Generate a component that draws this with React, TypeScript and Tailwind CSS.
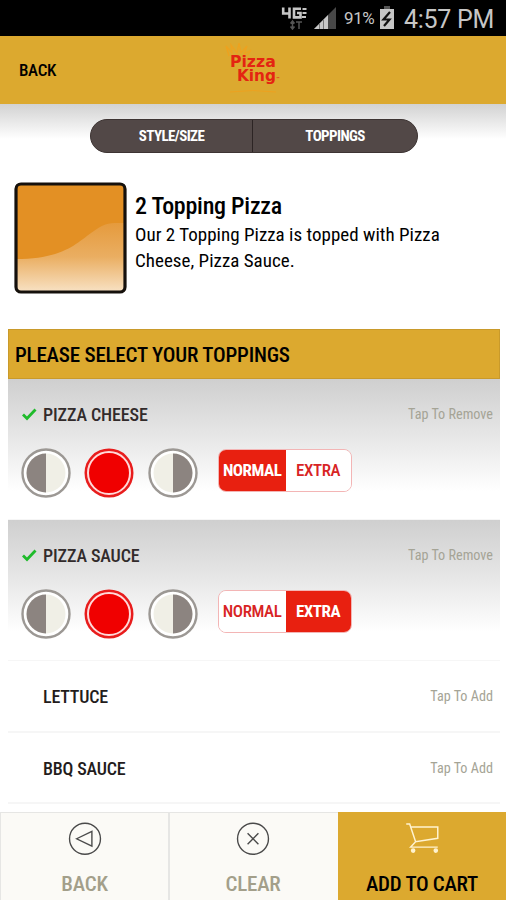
const CONDENSED = "font-['Roboto_Condensed','Roboto',sans-serif] [font-stretch:75%]";

const portions = ['left', 'whole', 'right'];

const StatusBar = () => (
    <div className="flex h-[36px] items-center justify-end bg-black pr-[12px] text-[#c6c6c6] font-['Roboto',sans-serif] [font-stretch:100%]">
        {/*4G and data arrows*/}
        <svg width="28" height="24" viewBox="0 0 28 24" fill="none" stroke="#c6c6c6" strokeWidth="2.600">
            <path d="M3.200 1.500v6H10M9.500 1.500v11M21 2.800H14v8.600h6.500V7H17" />
            <path d="M22.500 3h4M22.500 7h4M22 11h4" strokeWidth="2" />
            <path d="M12.500 15v8M10.500 17.500l2-2.500 2 2.500M10.500 20.500l2 2.500 2-2.500M16 16h6M19 16v7" stroke="#555" strokeWidth="1.500" />
        </svg>
        <svg className="ml-[5px]" width="24" height="24" viewBox="0 0 24 24">
            <path d="M23 1v22H1z" fill="#484848" />
            <path d="M15 9v14H1z" fill="#c8c8c8" />
            <path d="M6.500 17v6M10.500 13v10" stroke="#777" strokeWidth="1" />
        </svg>
        <span className="ml-[7px] w-[31px] pt-[2px] text-[17px] tracking-[-0.500px]">91%</span>
        <svg className="ml-[4px]" width="16" height="24" viewBox="0 0 16 24">
            <path d="M5 0h6v3H5z" fill="#555" />
            <path d="M1 3h14v20H1z" fill="#c6c6c6" />
            <path d="M11 6L4.500 13.500h6L5 20" fill="none" stroke="#111" strokeWidth="2.200" />
        </svg>
        <span className="ml-[9px] pt-[3px] text-[25px] leading-none tracking-[-0.300px]">4:57 PM</span>
    </div>
);

const Logo = () => (
    <div className="relative h-[54px] w-[64px] font-['DejaVu_Sans',sans-serif] [font-stretch:100%] font-bold text-[#e42412]">
        <svg className="absolute left-0 top-0" width="64" height="54" viewBox="0 0 64 54" fill="none" stroke="#eda21f" strokeWidth="1.300">
            <path d="M6 13L3 3l6 7-1-8 6 8 2-10 2 10 6-7-3 8 7-4-4 6" />
            <path d="M7 49q22-3 46 0" strokeWidth="1" />
        </svg>
        <div className="relative pl-[7px] pt-[11px] text-[15.700px] leading-[15px]">Pizza</div>
        <div className="relative flex pl-[14px] text-[15.300px] leading-[15px]">
            King<span className="pt-[7px] text-[4px] leading-[6px]">™</span>
        </div>
    </div>
);

const Portion = ({ side }: { side: string }) => (
    <svg width="50" height="50" viewBox="0 0 50 50">
        {side === 'whole' ? (
            <>
                <circle cx="25" cy="25" r="24.500" fill="#e81c1c" />
                <circle cx="25" cy="25" r="21" fill="#f00000" stroke="#ffd9d9" strokeWidth="2" />
            </>
        ) : (
            <>
                <circle cx="25" cy="25" r="23.500" fill="#fff" stroke="#9c9894" strokeWidth="2.400" />
                <circle cx="25" cy="25" r="19.500" fill="#f0efe6" />
                {side === 'left'
                    ? <path d="M25 5.500a19.500 19.500 0 0 0 0 39z" fill="#8c8480" />
                    : <path d="M25 5.500a19.500 19.500 0 0 1 0 39z" fill="#8c8480" />}
            </>
        )}
    </svg>
);

interface toppingProps {
    name: string
    amount: string
}

const SelectedTopping = ({ name, amount }: toppingProps) => {
    const on = 'bg-[#e82010] text-white font-bold tracking-[-0.500px]';
    const off = 'bg-white text-[#d82424] font-medium tracking-[-0.400px]';

    return (
        <div className="h-[141px] border-b border-[#f6f6f6] bg-linear-to-b from-[#cfcfcf] via-[#e6e6e6] via-40% to-white to-80%">
            <div className="flex items-center justify-between pt-[22px] pl-[14px] pr-[7px] h-[49px]">
                <div className="flex items-center">
                    <svg width="15" height="13" viewBox="0 0 15 13">
                        <path d="M1 6.500l4 4L13.500 1.500" fill="none" stroke="#1fbb2b" strokeWidth="2.800" />
                    </svg>
                    <span className="pl-[6px] text-[18px] font-medium tracking-[-0.120px] text-[#322b2b]">{name}</span>
                </div>
                <span className="text-[14.200px] text-[#a5a496]">Tap To Remove</span>
            </div>
            <div className="flex items-center pl-[13px] pt-[20px]">
                <div className="flex gap-[13.300px]">
                    {portions.map((side) => <Portion key={side} side={side} />)}
                </div>
                <div className="ml-[20px] -mt-[6px] flex h-[43px] w-[134px] overflow-hidden rounded-[8px] border border-[#f3b5b5] text-[17px]">
                    <div className={`flex w-[67px] items-center justify-center pt-px ${amount === 'normal' ? on : off}`}>NORMAL</div>
                    <div className={`flex flex-1 items-center justify-center pt-px ${amount === 'extra' ? on : off}`}>EXTRA</div>
                </div>
            </div>
        </div>
    );
}

const PlainTopping = ({ name }: { name: string }) => (
    <div className="flex h-[71.500px] items-center justify-between border-b-2 border-[#f6f6f6] pl-[35px] pr-[7px] pt-[2px]">
        <span className="text-[18px] font-medium tracking-[-0.200px] text-[#231c1c]">{name}</span>
        <span className="text-[14.200px] text-[#a5a496]">Tap To Add</span>
    </div>
);

export default function App() {
    return (
        <div className={`flex h-[900px] w-[506px] flex-col overflow-hidden bg-white ${CONDENSED}`}>
            <StatusBar />

            {/*Header*/}
            <div className="flex h-[68px] items-center bg-[#dca92f] pl-[19px]">
                <span className="w-[204px] pt-[2px] text-[17px] font-medium tracking-[-0.300px]">BACK</span>
                <Logo />
            </div>

            {/*Tabs*/}
            <div className="h-[78px] bg-linear-to-b from-[#d2d2d2] to-white to-45% pl-[90px] pt-[15px]">
                <div className="flex h-[34px] w-[328px] rounded-full border border-[#3d3433] bg-[#524847] text-[15px] font-bold tracking-[-0.600px] text-white">
                    <div className="flex w-[162px] items-center justify-center border-r border-[#2c2424] pt-px">STYLE/SIZE</div>
                    <div className="flex flex-1 items-center justify-center pt-px">TOPPINGS</div>
                </div>
            </div>

            {/*Item summary*/}
            <div className="flex h-[147px] pl-[14px]">
                <svg width="113" height="112" viewBox="0 0 113 112">
                    <defs>
                        <linearGradient id="glow" x1="0" y1="40" x2="0" y2="110" gradientUnits="userSpaceOnUse">
                            <stop offset="0" stopColor="#e59a3c" />
                            <stop offset="0.500" stopColor="#eaae62" />
                            <stop offset="1" stopColor="#f8e2c4" />
                        </linearGradient>
                    </defs>
                    <rect x="2" y="2" width="109" height="108" rx="5" fill="#e39024" />
                    <path d="M2 77C48 77 62 62 77 51S95 41 111 41V110H2z" fill="url(#glow)" />
                    <rect x="2" y="2" width="109" height="108" rx="5" fill="none" stroke="#15100c" strokeWidth="3.200" />
                </svg>
                <div className="pl-[8px] pt-[9px]">
                    <div className="text-[24px] font-medium leading-[31px] tracking-[-0.250px]">2 Topping Pizza</div>
                    <div className="w-[330px] text-[19px] leading-[26px] tracking-[0.020px]">Our 2 Topping Pizza is topped with Pizza Cheese, Pizza Sauce.</div>
                </div>
            </div>

            {/*Toppings*/}
            <div className="mx-[8px] h-[483px] w-[492px] shrink-0">
                <div className="flex h-[50px] items-center border border-[#c99a2b] bg-[#dca92f] pl-[6px] pt-[3px] text-[21px] font-medium tracking-[-0.200px]">PLEASE SELECT YOUR TOPPINGS</div>
                <SelectedTopping name="PIZZA CHEESE" amount="normal" />
                <SelectedTopping name="PIZZA SAUCE" amount="extra" />
                <PlainTopping name="LETTUCE" />
                <PlainTopping name="BBQ SAUCE" />
            </div>

            {/*Bottom actions*/}
            <div className="flex h-[88px] shrink-0 bg-[#fbfaf6] text-[21px] font-medium tracking-[-0.200px] text-[#a39f8a]">
                <div className="flex w-[170px] flex-col items-center border-r-2 border-l border-t border-[#e6e6e4] pt-[9px]">
                    <svg width="34" height="34" viewBox="0 0 34 34" fill="none" stroke="#4a4a4a" strokeWidth="1.400">
                        <circle cx="17" cy="17" r="15.700" />
                        <path d="M8.500 17L24 9.500v15z" />
                    </svg>
                    <span className="pt-[13px]">BACK</span>
                </div>
                <div className="flex w-[168px] flex-col items-center border-t border-[#e6e6e4] pr-[2px] pt-[9px]">
                    <svg width="34" height="34" viewBox="0 0 34 34" fill="none" stroke="#4a4a4a" strokeWidth="1.400">
                        <circle cx="17" cy="17" r="15.700" />
                        <path d="M11.500 11.500l11 11M22.500 11.500l-11 11" />
                    </svg>
                    <span className="pt-[13px]">CLEAR</span>
                </div>
                <div className="flex flex-1 flex-col items-center bg-[#dca92f] pt-[10px] text-black">
                    <svg width="34" height="34" viewBox="0 0 34 34" fill="none" stroke="#fff3d0" strokeWidth="1.500">
                        <path d="M1 2h3.500l6 18L33 16.500V5H5.500M10.500 20L5.500 25.500H33" />
                        <circle cx="8" cy="29" r="1.600" fill="#fff3d0" />
                        <circle cx="31" cy="29" r="1.600" fill="#fff3d0" />
                    </svg>
                    <span className="pt-[13px] tracking-[-0.300px]">ADD TO CART</span>
                </div>
            </div>
        </div>
    );
}
